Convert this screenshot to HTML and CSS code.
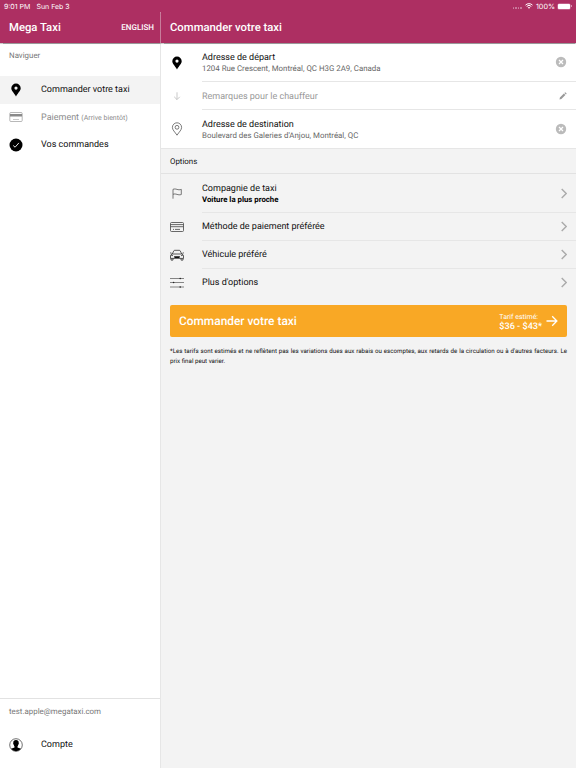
FILE: index.html
```html
<!DOCTYPE html>
<html lang="fr">
<head>
    <meta charset="UTF-8">
    <meta name="viewport" content="width=device-width, initial-scale=1.0">
    <title>Mega Taxi</title>
    <link rel="stylesheet" href="styles.css">
</head>
<body>
    <!-- Status Bar -->
    <div class="status-bar">
        <span class="time">9:01 PM</span>
        <span class="date">Sun Feb 3</span>
        <span class="dots"><i></i><i></i><i></i><i></i></span>
        <svg class="wifi" viewBox="0 0 16 12"><path d="M1 4.2a10 10 0 0 1 14 0M3.4 6.8a6.6 6.6 0 0 1 9.2 0" fill="none" stroke="#fff" stroke-width="2"/><path d="M5.5 9a3.6 3.6 0 0 1 5 0L8 11.7z" fill="#fff"/></svg>
        <span class="percent">100%</span>
        <span class="battery"></span>
    </div>

    <div class="app">
        <!-- Sidebar -->
        <aside class="sidebar">
            <header class="header">
                <h1>Mega Taxi</h1>
                <a href="#" class="language">ENGLISH</a>
            </header>
            <p class="side-title">Naviguer</p>
            <nav class="menu">
                <a href="#" class="menu-item active">
                    <svg class="icon" viewBox="0 0 14 14"><path fill-rule="evenodd" d="M7 .5A4.700 4.700 0 0 0 2.300 5.200C2.300 7.700 4.800 9.600 7 13.400 9.200 9.600 11.700 7.700 11.700 5.200A4.700 4.700 0 0 0 7 .5zM7 3.500a1.600 1.600 0 1 1 0 3.200 1.600 1.600 0 0 1 0-3.200z"/></svg>
                    <span class="menu-label">Commander votre taxi</span>
                </a>
                <a href="#" class="menu-item disabled">
                    <svg class="icon" viewBox="0 0 14 14"><rect x=".8" y="2.500" width="12.400" height="9" rx="1" fill="none" stroke="#999" stroke-width=".7"/><path d="M1 4h12v2.500H1z" fill="#8a8a8a"/><path d="M4 9.500h6" stroke="#bbb" stroke-width=".8"/></svg>
                    <span class="menu-label">Paiement <small>(Arrive bientôt)</small></span>
                </a>
                <a href="#" class="menu-item">
                    <svg class="icon" viewBox="0 0 14 14"><circle cx="7" cy="7" r="6.500"/><path d="M4.200 7.500l1.900 1.700 3.800-4.300" fill="none" stroke="#fff" stroke-width=".9"/></svg>
                    <span class="menu-label">Vos commandes</span>
                </a>
            </nav>
            <div class="side-footer">
                <p class="email">test.apple@megataxi.com</p>
                <a href="#" class="menu-item">
                    <svg class="icon" viewBox="0 0 14 14"><circle cx="7" cy="7" r="6.300" fill="#fff" stroke="#111" stroke-width=".6"/><path d="M7 1.900c-2 0-3 1.300-2.700 3.100-.4.600.1 1.500.5 1.800.1.800.4 1.200.7 1.600v1.200l-3.500 1.200A6.300 6.300 0 0 0 7 13.300a6.300 6.300 0 0 0 5-2.500L8.500 9.600V8.400c.3-.4.600-.8.700-1.600.4-.3.900-1.200.5-1.800.3-1.800-.7-3.100-2.700-3.100z"/></svg>
                    <span class="menu-label">Compte</span>
                </a>
            </div>
        </aside>

        <!-- Order Form -->
        <main class="content">
            <header class="header">
                <h1>Commander votre taxi</h1>
            </header>

            <section class="addresses">
                <div class="row tall">
                    <svg class="icon" viewBox="0 0 14 14"><path fill-rule="evenodd" d="M7 .5A4.700 4.700 0 0 0 2.300 5.200C2.300 7.700 4.800 9.600 7 13.400 9.200 9.600 11.700 7.700 11.700 5.200A4.700 4.700 0 0 0 7 .5zM7 3.500a1.600 1.600 0 1 1 0 3.200 1.600 1.600 0 0 1 0-3.200z"/></svg>
                    <div class="row-body">
                        <div class="row-text">
                            <h3>Adresse de départ</h3>
                            <p>1204 Rue Crescent, Montréal, QC H3G 2A9, Canada</p>
                        </div>
                        <svg class="clear" viewBox="0 0 12 12"><circle cx="6" cy="6" r="5.200" fill="#bbb"/><path d="M4 4l4 4M8 4l-4 4" stroke="#fff" stroke-width="1.300"/></svg>
                    </div>
                </div>
                <div class="row">
                    <svg class="icon" viewBox="0 0 14 14"><path d="M7 3.300v7.200M4.200 7.800L7 10.600l2.800-2.800" fill="none" stroke="#bbb" stroke-width=".8"/></svg>
                    <div class="row-body">
                        <span class="placeholder">Remarques pour le chauffeur</span>
                        <svg class="pencil" viewBox="0 0 8 8"><path d="M.5 7.500l.4-1.900L4.900 1.600l1.500 1.500-4 4zM5.400 1.100l.5-.5q.4-.4.800 0l.7.700q.4.400 0 .8l-.5.5z" fill="#999"/></svg>
                    </div>
                </div>
                <div class="row tall">
                    <svg class="icon" viewBox="0 0 14 14"><path d="M7 .8a4.600 4.600 0 0 0-4.600 4.600C2.400 8 4.800 9.800 7 13.200 9.200 9.800 11.600 8 11.600 5.400A4.600 4.600 0 0 0 7 .8z" fill="none" stroke="#444" stroke-width=".7"/><circle cx="7" cy="5.300" r="1.900" fill="none" stroke="#444" stroke-width=".7"/></svg>
                    <div class="row-body">
                        <div class="row-text">
                            <h3>Adresse de destination</h3>
                            <p>Boulevard des Galeries d'Anjou, Montréal, QC</p>
                        </div>
                        <svg class="clear" viewBox="0 0 12 12"><circle cx="6" cy="6" r="5.200" fill="#bbb"/><path d="M4 4l4 4M8 4l-4 4" stroke="#fff" stroke-width="1.300"/></svg>
                    </div>
                </div>
            </section>

            <h2 class="section-title">Options</h2>

            <section class="options">
                <div class="row tall">
                    <svg class="icon" viewBox="0 0 14 14"><path d="M3 11.700V2.300c1.500-.6 2.700-.3 4 .1s2.600.6 4.300 0V7.500c-1.600.6-3 .3-4.300-.1s-2.500-.7-4-.1" fill="none" stroke="#444" stroke-width=".7"/></svg>
                    <div class="row-body">
                        <div class="row-text">
                            <h3>Compagnie de taxi</h3>
                            <p class="selected">Voiture la plus proche</p>
                        </div>
                        <svg class="chevron" viewBox="0 0 6 11"><path d="M.7 1l4.500 4.500L.7 10"/></svg>
                    </div>
                </div>
                <div class="row">
                    <svg class="icon" viewBox="0 0 14 14"><rect x=".5" y="2.500" width="13" height="9" rx="1" fill="none" stroke="#444" stroke-width=".8"/><path d="M.6 4.600h12.800M.6 6.700h12.800M3 9.400h1M5 9.400h5" stroke="#444" stroke-width=".8"/></svg>
                    <div class="row-body">
                        <h3>Méthode de paiement préférée</h3>
                        <svg class="chevron" viewBox="0 0 6 11"><path d="M.7 1l4.500 4.500L.7 10"/></svg>
                    </div>
                </div>
                <div class="row">
                    <svg class="icon" viewBox="0 0 14 14"><path d="M2.300 6l1.400-3q.3-.7 1-.7h4.600q.7 0 1 .7l1.400 3M.1 4.800l1.600.5M13.900 4.800l-1.600.5M2.300 6h9.400q1.800.5 1.800 2v2.400H.5V8q0-1.500 1.800-2zM1 10.400v1.700h2v-1.700M11 10.400v1.700h2v-1.700M1.200 7.300l1.800.4M12.800 7.300l-1.800.4" fill="none" stroke="#333" stroke-width=".8"/><path d="M4 8.300h6l-.6 1.600H4.600z" fill="#111"/></svg>
                    <div class="row-body">
                        <h3>Véhicule préféré</h3>
                        <svg class="chevron" viewBox="0 0 6 11"><path d="M.7 1l4.500 4.500L.7 10"/></svg>
                    </div>
                </div>
                <div class="row">
                    <svg class="icon" viewBox="0 0 14 14"><path d="M0 2.500h14M0 6.500h14M0 11h14" stroke="#555" stroke-width=".7"/><g fill="#222"><circle cx="10.200" cy="2.500" r=".8"/><circle cx="3.600" cy="6.500" r=".8"/><circle cx="10.200" cy="11" r=".8"/></g></svg>
                    <div class="row-body">
                        <h3>Plus d'options</h3>
                        <svg class="chevron" viewBox="0 0 6 11"><path d="M.7 1l4.500 4.500L.7 10"/></svg>
                    </div>
                </div>
            </section>

            <a href="#" class="order-btn">
                <span class="order-label">Commander votre taxi</span>
                <span class="fare">
                    <span class="fare-title">Tarif estimé:</span>
                    <strong>$36 - $43*</strong>
                </span>
                <svg class="arrow" viewBox="0 0 12 12"><path d="M.5 6h10.300M6.200 1.300L10.900 6l-4.700 4.700" fill="none" stroke="#fff" stroke-width="1.300"/></svg>
            </a>

            <p class="note">*Les tarifs sont estimés et ne reflètent pas les variations dues aux rabais ou escomptes, aux retards de la circulation ou à d'autres facteurs. Le prix final peut varier.</p>
        </main>
    </div>
</body>
</html>
```
FILE: styles.css
```css
* {
    margin: 0;
    padding: 0;
    box-sizing: border-box;
}

body {
    display: flex;
    flex-direction: column;
    height: 100vh;
    overflow: hidden;
    font-family: Roboto, "Liberation Sans", sans-serif;
    font-size: 9px;
    text-rendering: geometricPrecision;
    color: #111;
    background-color: #f3f3f3;
}

a {
    color: inherit;
    text-decoration: none;
}

svg {
    display: block;
    flex-shrink: 0;
}

/* Status Bar */
.status-bar {
    display: flex;
    align-items: center;
    height: 12px;
    padding: 0 4px;
    background-color: #ad2f62;
    color: #fff;
    font-family: Inter, sans-serif;
    font-size: 7px;
}

.date {
    margin-left: 6px;
}

.dots {
    display: flex;
    gap: 1px;
    margin-left: auto;
    margin-top: 4px;
}

.dots i {
    width: 1.5px;
    height: 1.5px;
    border-radius: 50%;
    background-color: #cf86a5;
}

.wifi {
    width: 8px;
    height: 6px;
    margin: 0 3px;
}

.percent {
    font-size: 7.2px;
}

.battery {
    position: relative;
    width: 12px;
    height: 5px;
    margin: 0 2px 0 3px;
    border-radius: 1px;
    background-color: #fff;
    box-shadow: 0 0 0 0.5px #d68ead;
}

.battery::after {
    content: "";
    position: absolute;
    right: -1.5px;
    top: 1.5px;
    width: 1px;
    height: 2px;
    background-color: #d68ead;
}

.app {
    display: flex;
    flex: 1;
}

/* Header */
.header {
    position: relative; /* Keeps the shadow above the rows */
    display: flex;
    align-items: center;
    justify-content: space-between;
    height: 31px;
    padding: 0 6px 0 9px;
    background-color: #ad2f62;
    color: #fff;
    box-shadow: 0 0.5px 1px rgba(0, 0, 0, 0.4);
}

h1 {
    font-size: 11.3px;
    font-weight: 500;
    line-height: 14px;
    padding-top: 1px;
}

.language {
    font-size: 8px;
    font-weight: 500;
    padding-bottom: 1px;
}

/* Sidebar */
.sidebar {
    display: flex;
    flex-direction: column;
    width: 161px;
    background-color: #fff;
    border-right: 1px solid #e6e6e6;
}

.sidebar .header {
    border-right: 1px solid #ce82a1;
    margin-right: -1px;
}

.side-title,
.email {
    color: #777;
    font-size: 7.9px;
    line-height: 12px;
    padding-left: 9px;
}

.side-title {
    padding-top: 7px;
    height: 33px;
}

.menu-item {
    display: flex;
    align-items: center;
    gap: 18px;
    height: 27.5px;
    padding-left: 9px;
}

.menu-item.active {
    background-color: #f3f3f3;
}

.menu-item.disabled {
    color: #8c8c8c;
}

.menu-label {
    padding-top: 1px;
}

.menu-item small {
    font-size: 7px;
}

.icon {
    width: 14px;
    height: 14px;
}

.side-footer {
    height: 70px;
    margin-top: auto;
    padding-top: 7px;
    border-top: 1px solid #e2e2e2;
}

.email {
    margin-bottom: 13px;
}

/* Content */
.content {
    flex: 1;
}

.addresses {
    background-color: #fff;
    border-bottom: 1px solid #e6e6e6;
}

.row {
    display: flex;
    align-items: center;
    gap: 18px;
    height: 28px;
    padding-left: 9px;
}

.row.tall {
    height: 39px;
}

.addresses .row.tall:last-child {
    height: 38px;
}

.row-body {
    display: flex;
    flex: 1;
    align-items: center;
    justify-content: space-between;
    height: 100%;
    padding-right: 9px;
    border-bottom: 1px solid #e6e6e6;
}

.row:last-child .row-body {
    border-bottom-color: transparent;
}

h3 {
    font-size: 9px;
    font-weight: 400;
    line-height: 11px;
    padding-top: 2px;
}

.row-text {
    padding-top: 2px;
}

.row-text h3 {
    padding-top: 1px;
}

.row-text p {
    margin-top: -1px;
    color: #666;
    font-size: 7.88px;
    line-height: 11px;
}

.row-text .selected {
    color: #000;
    font-size: 7.8px;
    font-weight: 700;
}

.placeholder {
    padding-top: 3px;
    color: #999;
}

.clear {
    width: 12px;
    height: 12px;
}

.pencil {
    width: 8px;
    height: 8px;
}

.chevron {
    width: 6px;
    height: 11px;
    fill: none;
    stroke: #aaa;
    stroke-width: 1.4;
}

.section-title {
    height: 25px;
    padding-left: 9px;
    border-bottom: 1px solid #e2e2e2;
    font-size: 7.9px;
    font-weight: 400;
    line-height: 25px;
}

/* Order Button */
.order-btn {
    display: flex;
    align-items: center;
    height: 32px;
    margin: 8px 9px 0;
    padding: 0 9px;
    border-radius: 2px;
    background-color: #f9a825;
    color: #fff;
}

.order-label {
    flex: 1;
    font-size: 11.9px;
    font-weight: 500;
}

.fare {
    padding-top: 2px;
    font-size: 9.1px;
    line-height: 10px;
}

.fare-title {
    display: block;
    font-size: 7px;
}

.fare strong {
    font-weight: 500;
}

.arrow {
    width: 12px;
    height: 12px;
    margin-left: 4px;
}

.note {
    margin: 10px 9px 0;
    font-size: 6.2px;
    line-height: 9.5px;
    text-align: justify;
}
```
